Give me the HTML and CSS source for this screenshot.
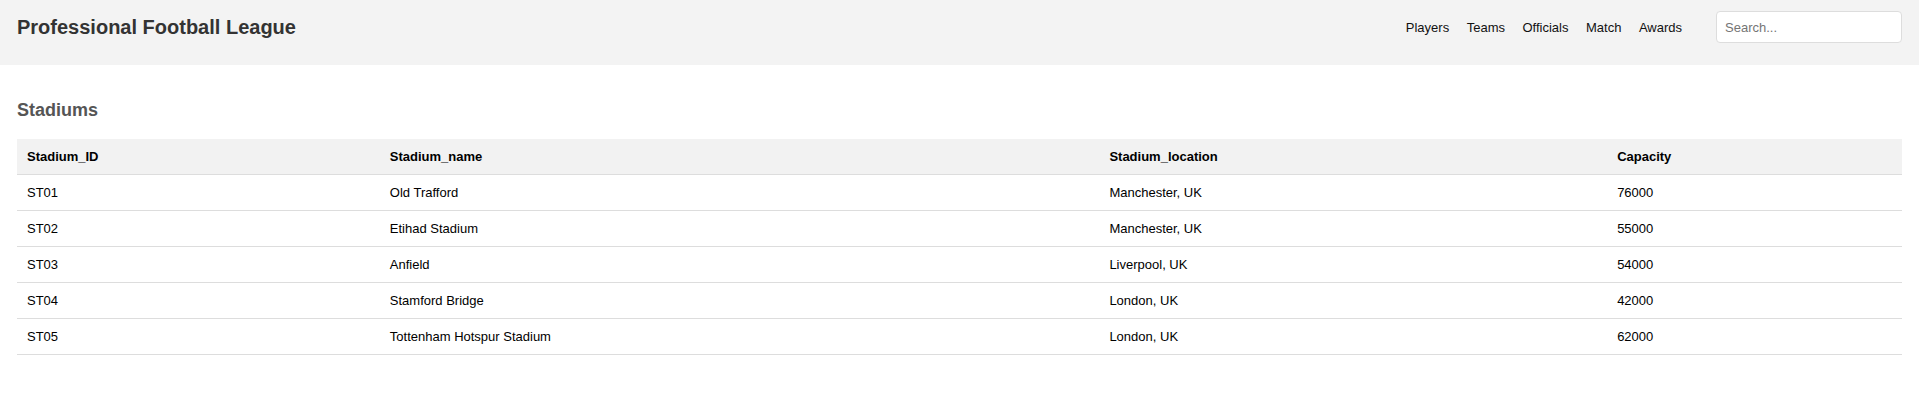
FILE: index.html
```html
<!DOCTYPE html>
<html lang="en">
<head>
<meta charset="utf-8">
<title>Professional Football League</title>
<link rel="stylesheet" href="styles.css">
</head>
<body>
<header class="topbar">
  <h1 class="brand">Professional Football League</h1>
  <div class="topbar-right">
    <nav class="nav">
      <a href="#">Players</a>
      <a href="#">Teams</a>
      <a href="#">Officials</a>
      <a href="#">Match</a>
      <a href="#">Awards</a>
    </nav>
    <input class="search" type="text" placeholder="Search...">
  </div>
</header>
<main class="content">
  <h2 class="section-title">Stadiums</h2>
  <table class="data-table">
    <thead>
      <tr><th class="col-id">Stadium_ID</th><th class="col-name">Stadium_name</th><th class="col-loc">Stadium_location</th><th class="col-cap">Capacity</th></tr>
    </thead>
    <tbody>
      <tr><td>ST01</td><td>Old Trafford</td><td>Manchester, UK</td><td>76000</td></tr>
      <tr><td>ST02</td><td>Etihad Stadium</td><td>Manchester, UK</td><td>55000</td></tr>
      <tr><td>ST03</td><td>Anfield</td><td>Liverpool, UK</td><td>54000</td></tr>
      <tr><td>ST04</td><td>Stamford Bridge</td><td>London, UK</td><td>42000</td></tr>
      <tr><td>ST05</td><td>Tottenham Hotspur Stadium</td><td>London, UK</td><td>62000</td></tr>
    </tbody>
  </table>
</main>
</body>
</html>
```
FILE: styles.css
```css
* { box-sizing: border-box; }
html, body { margin: 0; padding: 0; background: #fff; }
body { font-family: "Liberation Sans", Arial, sans-serif; color: #000; font-size: 13px; }

.topbar {
  background: #f3f3f3;
  height: 65px;
  padding: 11px 17px 22px 17px;
  display: flex;
  align-items: center;
  justify-content: space-between;
}
.brand {
  margin: 0;
  font-size: 20px;
  font-weight: bold;
  color: #333;
}
.topbar-right {
  display: flex;
  align-items: center;
}
.nav {
  display: flex;
  gap: 17.5px;
  margin-right: 34px;
}
.nav a {
  color: #111;
  text-decoration: none;
  font-size: 13px;
}
.search {
  width: 186px;
  height: 32px;
  border: 1px solid #ddd;
  border-radius: 4px;
  background: #fff;
  padding: 0 8px;
  font-family: "Liberation Sans", Arial, sans-serif;
  font-size: 13px;
  color: #333;
  outline: none;
}
.search::placeholder { color: #757575; }

.content {
  padding: 35px 17px 0 17px;
}
.section-title {
  margin: 0 0 18px 0;
  font-size: 18px;
  font-weight: bold;
  color: #555;
}
.data-table {
  width: 100%;
  border-collapse: collapse;
  font-size: 13px;
}
.col-id { width: 363px; }
.col-name { width: 720px; }
.col-loc { width: 508px; }
.col-cap { width: 295px; }
.data-table th,
.data-table td {
  text-align: left;
  padding: 10px;
  border-bottom: 1px solid #ddd;
  line-height: 15px;
}
.data-table th {
  background: #f2f2f2;
  font-weight: bold;
  color: #000;
}
.data-table td { color: #000; }
```
